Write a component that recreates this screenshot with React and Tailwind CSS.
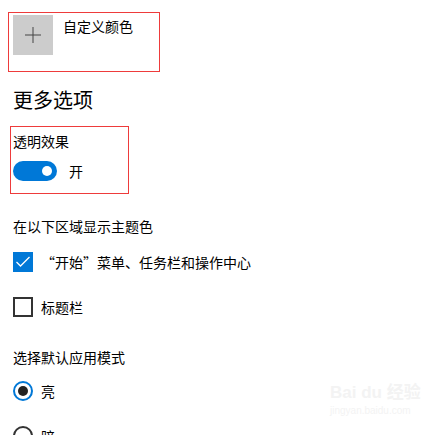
import { useState } from 'react'

const font = { fontFamily: '"Noto Sans CJK SC", "Noto Sans", sans-serif' }

function Toggle({ on, onChange }) {
  return (
    <button
      onClick={() => onChange(!on)}
      className={`w-[44px] h-[20px] rounded-full flex items-center px-[5px] ${on ? 'bg-[#0078d7] justify-end' : 'border-2 border-[#333] justify-start'}`}
    >
      <span className={`w-[10px] h-[10px] rounded-full ${on ? 'bg-white' : 'bg-[#333]'}`} />
    </button>
  )
}

function Check({ checked, label, onClick }) {
  return (
    <div className="flex items-center h-[20px] cursor-pointer" onClick={onClick}>
      {checked ? (
        <span className="w-[20px] h-[20px] bg-[#0078d7] flex items-center justify-center">
          <svg width="20" height="20" viewBox="0 0 20 20">
            <polyline points="3.5,10 7.5,14 16.5,5" fill="none" stroke="white" strokeWidth="1.3" />
          </svg>
        </span>
      ) : (
        <span className="w-[20px] h-[20px] border-2 border-[#333]" />
      )}
      <span className="ml-[8px] text-[14px] leading-[20px] text-black">{label}</span>
    </div>
  )
}

function Radio({ checked, label, onClick }) {
  return (
    <div className="flex items-center h-[20px] cursor-pointer" onClick={onClick}>
      <span className={`w-[20px] h-[20px] rounded-full border-2 flex items-center justify-center ${checked ? 'border-[#0078d7]' : 'border-[#333]'}`}>
        {checked && <span className="w-[10px] h-[10px] rounded-full bg-[#222]" />}
      </span>
      <span className="ml-[8px] text-[14px] leading-[20px] text-black">{label}</span>
    </div>
  )
}

export default function App() {
  const [transparent, setTransparent] = useState(true)
  const [start, setStart] = useState(true)
  const [title, setTitle] = useState(false)
  const [mode, setMode] = useState('light')

  return (
    <div className="relative w-[446px] h-[435px] overflow-hidden bg-white text-black" style={font}>
      {/* 自定义颜色 */}
      <div className="ml-[8px] mt-[12px] w-[152px] h-[60px] border border-[#ee3b3b] flex pl-[4px] pt-[2px]">
        <div className="w-[40px] h-[40px] bg-[#cccccc] flex items-center justify-center">
          <svg width="16" height="16" viewBox="0 0 16 16">
            <path d="M8 0V16M0 8H16" stroke="#444" strokeWidth="1" />
          </svg>
        </div>
        <span className="ml-[10px] mt-[1px] text-[14px] leading-[20px]">自定义颜色</span>
      </div>

      <div className="pl-[13px] mt-[14px] text-[20px] leading-[28px]">更多选项</div>

      {/* 透明效果 */}
      <div className="ml-[10px] mt-[12px] w-[119px] h-[68px] border border-[#ee3b3b] pl-[2px] pt-[4px]">
        <div className="text-[14px] leading-[20px]">透明效果</div>
        <div className="flex items-center mt-[10px]">
          <Toggle on={transparent} onChange={setTransparent} />
          <span className="ml-[12px] text-[14px] leading-[20px]">{transparent ? '开' : '关'}</span>
        </div>
      </div>

      <div className="pl-[13px]">
        <div className="mt-[22px] text-[14px] leading-[20px]">在以下区域显示主题色</div>
        <div className="mt-[16px]">
          <Check checked={start} label="“开始”菜单、任务栏和操作中心" onClick={() => setStart(!start)} />
        </div>
        <div className="mt-[25px]">
          <Check checked={title} label="标题栏" onClick={() => setTitle(!title)} />
        </div>
        <div className="mt-[30px] text-[14px] leading-[20px]">选择默认应用模式</div>
        <div className="mt-[14px]">
          <Radio checked={mode === 'light'} label="亮" onClick={() => setMode('light')} />
        </div>
        <div className="mt-[25px]">
          <Radio checked={mode === 'dark'} label="暗" onClick={() => setMode('dark')} />
        </div>
      </div>

      {/* watermark */}
      <div className="absolute left-[330px] top-[384px] text-[#f3f3f3] pointer-events-none select-none">
        <div className="text-[17px] leading-[18px] font-bold" style={{ fontFamily: '"Liberation Sans", "Noto Sans CJK SC", sans-serif' }}>Bai du 经验</div>
        <div className="text-[10px] leading-[14px] mt-[2px]" style={{ fontFamily: '"Liberation Sans", sans-serif' }}>jingyan.baidu.com</div>
      </div>
    </div>
  )
}
